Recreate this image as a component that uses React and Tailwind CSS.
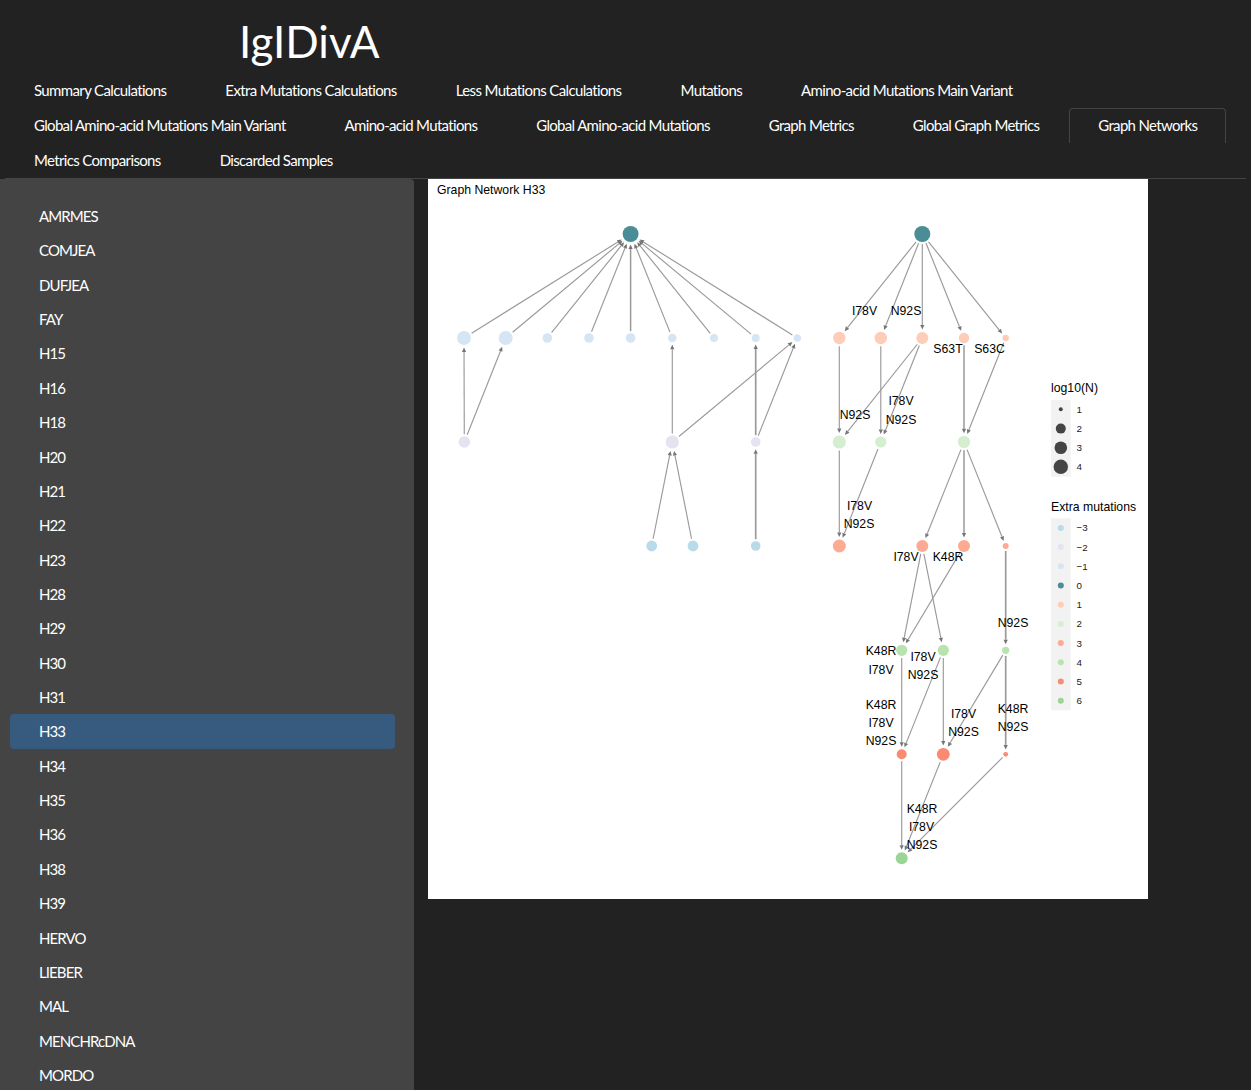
import React from 'react';

// tracking differs per row: the hinted Lato of the page is not evenly narrower
const tabs = [
  { label: 'Summary Calculations', tracking: 'tracking-[-0.63px]' },
  { label: 'Extra Mutations Calculations', tracking: 'tracking-[-0.63px]' },
  { label: 'Less Mutations Calculations', tracking: 'tracking-[-0.63px]' },
  { label: 'Mutations', tracking: 'tracking-[-0.63px]' },
  { label: 'Amino-acid Mutations Main Variant', tracking: 'tracking-[-0.66px]' },
  { label: 'Global Amino-acid Mutations Main Variant', tracking: 'tracking-[-0.68px]' },
  { label: 'Amino-acid Mutations', tracking: 'tracking-[-0.68px]' },
  { label: 'Global Amino-acid Mutations', tracking: 'tracking-[-0.68px]' },
  { label: 'Graph Metrics', tracking: 'tracking-[-0.68px]' },
  { label: 'Global Graph Metrics', tracking: 'tracking-[-0.68px]' },
  { label: 'Graph Networks', tracking: 'tracking-[-0.68px]' },
  { label: 'Metrics Comparisons', tracking: 'tracking-[-0.65px]' },
  { label: 'Discarded Samples', tracking: 'tracking-[-0.65px]' },
];

const samples = [
  'AMRMES', 'COMJEA', 'DUFJEA', 'FAY', 'H15', 'H16', 'H18', 'H20', 'H21', 'H22', 'H23', 'H28', 'H29',
  'H30', 'H31', 'H33', 'H34', 'H35', 'H36', 'H38', 'H39', 'HERVO', 'LIEBER', 'MAL', 'MENCHRcDNA', 'MORDO',
];

const colors = {
  '-3': '#b9dbe9',
  '-2': '#e4e3f0',
  '-1': '#d6e5f3',
  0: '#4a8d96',
  1: '#fdcdb9',
  2: '#d5eed0',
  3: '#fdaa92',
  4: '#b8e2b0',
  5: '#fb8a72',
  6: '#9bd596',
};

const X = [464, 505.7, 547.3, 589, 630.6, 672.3, 714, 755.7, 797.3];
const Y = { a: 234, b: 338, c: 442, d: 546, e: 650.3, f: 754.3, g: 858.3 };

// id: [x, y, radius, extra mutations]
const nodes = {
  root1: [630.6, Y.a, 8, 0],
  l1: [X[0], Y.b, 7, -1],
  l2: [X[1], Y.b, 7, -1],
  l3: [X[2], Y.b, 4.8, -1],
  l4: [X[3], Y.b, 4.8, -1],
  l5: [X[4], Y.b, 4.8, -1],
  l6: [X[5], Y.b, 4.3, -1],
  l7: [X[6], Y.b, 4, -1],
  l8: [X[7], Y.b, 4, -1],
  l9: [X[8], Y.b, 3.8, -1],
  m1: [464.3, Y.c, 5.8, -2],
  m2: [672.3, Y.c, 6.6, -2],
  m3: [755.7, Y.c, 4.8, -2],
  n1: [651.7, Y.d, 5.4, -3],
  n2: [693, Y.d, 5.4, -3],
  n3: [755.7, Y.d, 4.8, -3],

  root2: [922.3, Y.a, 8, 0],
  a1: [839.3, Y.b, 6.2, 1],
  a2: [880.8, Y.b, 6.2, 1],
  a3: [922.3, Y.b, 6, 1],
  a4: [964, Y.b, 5.2, 1],
  a5: [1005.7, Y.b, 3.2, 1],
  b1: [839.3, Y.c, 6.6, 2],
  b2: [880.8, Y.c, 5.6, 2],
  b3: [964, Y.c, 6.2, 2],
  c1: [839.3, Y.d, 6.5, 3],
  c2: [922.3, Y.d, 6, 3],
  c3: [964, Y.d, 6, 3],
  c4: [1005.7, Y.d, 3, 3],
  d1: [901.7, Y.e, 5.6, 4],
  d2: [943.3, Y.e, 5.6, 4],
  d3: [1005.7, Y.e, 3.6, 4],
  e1: [901.7, Y.f, 5, 5],
  e2: [943.3, Y.f, 6.4, 5],
  e3: [1005.7, Y.f, 2.4, 5],
  f1: [901.7, Y.g, 6, 6],
};

const edges = [
  ['l1', 'root1'], ['l2', 'root1'], ['l3', 'root1'], ['l4', 'root1'], ['l5', 'root1', 1.5], ['l6', 'root1'],
  ['l7', 'root1'], ['l8', 'root1'], ['l9', 'root1'],
  ['m1', 'l1'], ['m1', 'l2'], ['m2', 'l6'], ['m2', 'l9'], ['m3', 'l8', 1.7], ['m3', 'l9'],
  ['n1', 'm2'], ['n2', 'm2'], ['n3', 'm3', 1.7],

  ['root2', 'a1'], ['root2', 'a2'], ['root2', 'a3'], ['root2', 'a4'], ['root2', 'a5'],
  ['a1', 'b1'], ['a2', 'b2'], ['a3', 'b1'], ['a3', 'b2'], ['a4', 'b3', 1.5], ['a5', 'b3'],
  ['b1', 'c1'], ['b2', 'c1'], ['b3', 'c2'], ['b3', 'c3', 1.5], ['b3', 'c4'],
  ['c2', 'd1'], ['c2', 'd2'], ['c3', 'd1'], ['c4', 'd3', 1.7],
  ['d1', 'e1'], ['d2', 'e1'], ['d2', 'e2'], ['d3', 'e2'], ['d3', 'e3', 1.7],
  ['e1', 'f1'], ['e2', 'f1'], ['e3', 'f1'],
];

const labels = [
  ['I78V', 864.5, 310], ['N92S', 906, 310], ['S63T', 948, 348], ['S63C', 989.5, 348],
  ['I78V', 901, 400], ['N92S', 855, 414], ['N92S', 901, 419],
  ['I78V', 859.5, 505], ['N92S', 859, 523],
  ['I78V', 906, 556], ['K48R', 948, 556], ['N92S', 1013, 622],
  ['K48R', 881, 650.5], ['I78V', 923, 656], ['I78V', 881, 669], ['N92S', 923, 674],
  ['K48R', 881, 704], ['I78V', 881, 722], ['N92S', 881, 740],
  ['K48R', 1013, 708.5], ['I78V', 963.5, 713], ['N92S', 1013, 726.5], ['N92S', 963.5, 731],
  ['K48R', 922, 808], ['I78V', 921.5, 826], ['N92S', 922, 844],
];

const sizeLegend = [[1, 409.3, 2], [2, 428.6, 5], [3, 447.7, 6.3], [4, 466.8, 7.2]];
const colorLegend = [
  ['−3', '-3'], ['−2', '-2'], ['−1', '-1'], ['0', 0], ['1', 1], ['2', 2], ['3', 3], ['4', 4], ['5', 5], ['6', 6],
];

const Edge = ({ from, to, width = 1.15 }) => {
  const [x1, y1, r1] = nodes[from];
  const [x2, y2, r2] = nodes[to];
  const len = Math.hypot(x2 - x1, y2 - y1);
  const ux = (x2 - x1) / len;
  const uy = (y2 - y1) / len;
  const sx = x1 + ux * (r1 + 2);
  const sy = y1 + uy * (r1 + 2);
  const ex = x2 - ux * (r2 + 2.5);
  const ey = y2 - uy * (r2 + 2.5);
  const bx = ex - ux * 4.5;
  const by = ey - uy * 4.5;
  const head = `${ex},${ey} ${bx - uy * 2.1},${by + ux * 2.1} ${bx + uy * 2.1},${by - ux * 2.1}`;

  return (
    <g>
      <line x1={sx} y1={sy} x2={bx} y2={by} stroke="#9a9a9a" strokeWidth={width} />
      <polygon points={head} fill="#757575" />
    </g>
  );
};

const GraphNetwork = () => (
  <svg
    width="720"
    height="720"
    viewBox="428 179 720 720"
    className="block bg-white"
    style={{ fontFamily: '"Liberation Sans", Arial, sans-serif' }}
  >
    <text x="437" y="193.5" fontSize="12.25" fill="#000000">Graph Network H33</text>

    {edges.map(([from, to, width]) => (
      <Edge key={`${from}-${to}`} from={from} to={to} width={width} />
    ))}
    {Object.entries(nodes).map(([id, [x, y, r, extra]]) => (
      <circle key={id} cx={x} cy={y} r={r} fill={colors[extra]} />
    ))}
    {labels.map(([text, x, y]) => (
      <text key={`${text}-${x}-${y}`} x={x} y={y + 4.6} fontSize="12.25" textAnchor="middle" fill="#000000">
        {text}
      </text>
    ))}

    <text x="1051" y="392" fontSize="12.25" fill="#000000">log10(N)</text>
    <rect x="1051" y="400" width="19.7" height="76.8" fill="#f2f2f2" />
    {sizeLegend.map(([value, y, r]) => (
      <g key={value}>
        <circle cx="1060.8" cy={y} r={r} fill="#444444" />
        <text x="1076.5" y={y + 3.5} fontSize="9.8" fill="#1a1a1a">{value}</text>
      </g>
    ))}

    <text x="1051" y="510.5" fontSize="12.25" fill="#000000">Extra mutations</text>
    <rect x="1051" y="518.3" width="19.7" height="192" fill="#f2f2f2" />
    {colorLegend.map(([label, key], idx) => (
      <g key={label}>
        <circle cx="1060.8" cy={527.9 + idx * 19.2} r="3" fill={colors[key]} />
        <text x="1076.5" y={531.4 + idx * 19.2} fontSize="9.8" fill="#1a1a1a">{label}</text>
      </g>
    ))}
  </svg>
);

const App = () => (
  <div
    className="h-[1090px] overflow-hidden bg-[#222222] text-white"
    style={{ fontFamily: 'Lato, "Liberation Sans", sans-serif' }}
  >
    <h1 className="h-[73px] pt-[14px] pl-[239px] text-[44px] leading-[55px] font-normal">IgIDivA</h1>

    <ul className="mx-[5px] flex flex-wrap border-b border-[#444444]">
      {tabs.map((tab) => (
        <li key={tab.label} className="mr-[1px]">
          <a
            href="#"
            className={`block h-[35px] rounded-t border border-b-0 px-[28px] text-[15px] leading-[33px] ${tab.tracking} ${
              tab.label === 'Graph Networks' ? 'border-[#444444]' : 'border-transparent'
            }`}
          >
            {tab.label}
          </a>
        </li>
      ))}
    </ul>

    <div className="flex">
      <aside className="h-[911px] w-[414px] shrink-0 overflow-hidden rounded-tr bg-[#444444] pt-[20px] pl-[10px] pr-[19px]">
        <ul>
          {samples.map((sample) => (
            <li
              key={sample}
              className={`h-[34.36px] rounded pl-[29px] text-[15px] leading-[34px] tracking-[-0.9px] ${
                sample === 'H33' ? 'bg-[#375a7f]' : ''
              }`}
            >
              {sample}
            </li>
          ))}
        </ul>
      </aside>
      <main className="pl-[14px]">
        <GraphNetwork />
      </main>
    </div>
  </div>
);

export default App;
